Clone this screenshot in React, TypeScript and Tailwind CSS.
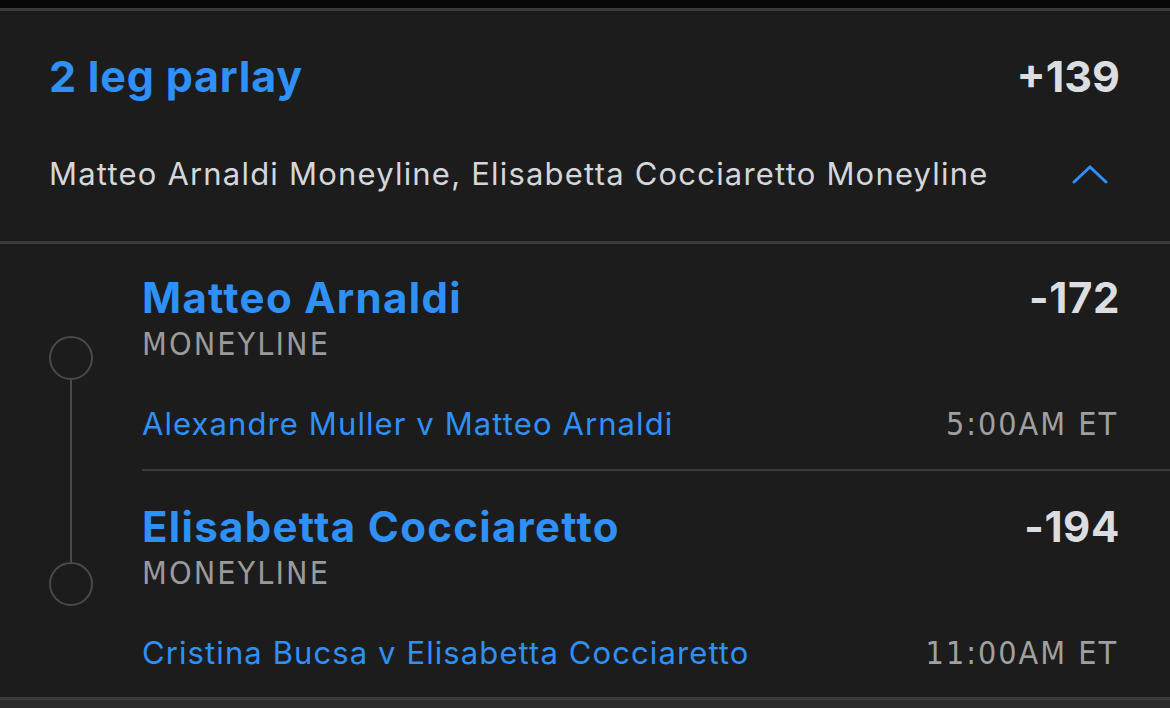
import React from "react";

const BLUE = "text-[#2f90f8]";
const COND = "font-['Liberation_Sans_Narrow','DejaVu_Sans_Condensed',Roboto,sans-serif]";

function Leg({
  name,
  odds,
  matchup,
  time,
  first,
}: {
  name: string;
  odds: string;
  matchup: string;
  time: string;
  first: boolean;
}) {
  return (
    <div className="flex">
      <div className="w-[142px] shrink-0 pl-[49px] flex">
        <div className="w-[44px] flex flex-col items-center">
          {first ? (
            <>
              <div className="h-[92px]" />
              <div className="w-[44px] h-[44px] rounded-full border-[2px] border-[#4a4a4a] shrink-0" />
              <div className="w-[2px] flex-1 bg-[#4a4a4a]" />
            </>
          ) : (
            <>
              <div className="w-[2px] h-[91px] bg-[#4a4a4a]" />
              <div className="w-[44px] h-[44px] rounded-full border-[2px] border-[#4a4a4a] shrink-0" />
            </>
          )}
        </div>
      </div>
      <div
        className={`flex-1 pr-[50px] ${first ? "pt-[30px] pb-[27px] border-b-[2px] border-[#3a3a3a]" : "pt-[32px] pb-[26px]"}`}
      >
        <div className="flex justify-between items-center h-[48px]">
          <span className={`${BLUE} font-bold text-[42px] leading-[48px] tracking-[1.3px]`}>{name}</span>
          <span className="text-[#dcdde0] font-bold text-[42px] leading-[48px] tracking-[0.6px]">{odds}</span>
        </div>
        <div className={`mt-[7px] h-[30px] text-[#9a9a9a] text-[32px] leading-[30px] tracking-[2.1px] ${COND}`}>
          MONEYLINE
        </div>
        <div className="mt-[47px] flex justify-between items-center h-[36px]">
          <span className={`${BLUE} text-[31px] leading-[36px] tracking-[1.1px]`}>{matchup}</span>
          <span className={`text-[#a0a0a0] text-[32px] leading-[36px] tracking-[2px] ${COND} pr-[2px]`}>
            {time}
          </span>
        </div>
      </div>
    </div>
  );
}

export default function App() {
  return (
    <div className="w-[1170px] h-[708px] bg-[#1c1c1c] font-['Inter',sans-serif] overflow-hidden flex flex-col">
      <div className="h-[8px] bg-[#080808] shrink-0" />
      <div className="h-[3px] bg-[#3a3a3a] shrink-0" />
      <div className="px-[49px] pr-[50px] pt-[40px] shrink-0 h-[230px]">
        <div className="flex justify-between items-center h-[50px]">
          <span className={`${BLUE} font-bold text-[43px] leading-[50px] tracking-[0.8px]`}>2 leg parlay</span>
          <span className="text-[#dcdde0] font-bold text-[43px] leading-[50px] tracking-[0px]">+139</span>
        </div>
        <div className="mt-[55px] flex justify-between items-center h-[36px]">
          <span className="text-[#d4d6d9] text-[31px] leading-[36px] tracking-[1.2px]">
            Matteo Arnaldi Moneyline, Elisabetta Cocciaretto Moneyline
          </span>
          <svg width="36" height="22" viewBox="0 0 36 22" className="mr-[12px]">
            <path d="M2 19 L18 4 L34 19" fill="none" stroke="#2f90f8" strokeWidth="3" strokeLinecap="round" strokeLinejoin="miter" />
          </svg>
        </div>
      </div>
      <div className="h-[3px] bg-[#3a3a3a] shrink-0" />
      <Leg
        first
        name="Matteo Arnaldi"
        odds="-172"
        matchup="Alexandre Muller v Matteo Arnaldi"
        time="5:00AM ET"
      />
      <Leg
        first={false}
        name="Elisabetta Cocciaretto"
        odds="-194"
        matchup="Cristina Bucsa v Elisabetta Cocciaretto"
        time="11:00AM ET"
      />
      <div className="flex-1 bg-[#2a2a2a] border-t-[3px] border-[#3a3a3a]" />
    </div>
  );
}
